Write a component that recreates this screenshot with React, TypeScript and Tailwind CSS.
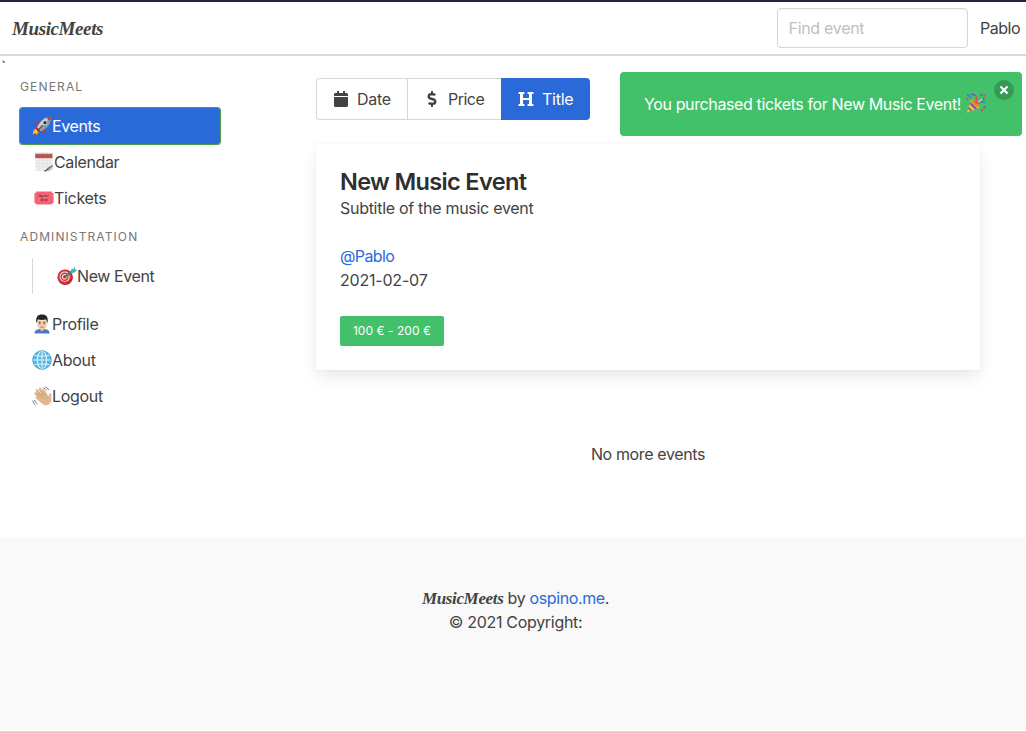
import React from "react";
import { FaCalendar, FaDollarSign, FaHeading } from "react-icons/fa";

type GlyphProps = { className?: string };

function Rocket({ className = "" }: GlyphProps) {
  return (
    <svg viewBox="0 0 20 20" className={className}>
      <path d="M10 5.5 6 5.8 2.6 9.3 6.5 9.6z" fill="#d7301f" />
      <path d="M14.4 10 14 14.2 10.6 17.2 10.4 13.2z" fill="#d7301f" />
      <path d="M5.4 12.2 1.6 13.5.6 18.4 3.6 17.3 4.4 19.2 7.8 14.8z" fill="#f2a51e" />
      <path d="M5.2 13.2 3 15.2 2 17.6 5.2 15.8z" fill="#ffe45e" />
      <path d="M5 11.2 8.9 15.2 7.4 16.6 3.6 12.6z" fill="#c6281c" />
      <path d="M18.9.7C13.4.8 8.1 4.6 5 11.2l3.9 4C15.3 12.2 19.2 6.6 18.9.7z" fill="#b5d2e1" />
      <path d="M18.9.7 7 13.2 8.9 15.2C15.3 12.2 19.2 6.6 18.9.7z" fill="#7d9fb3" />
      <path d="M18.9.7C17.3.7 15.7 1.1 14.3 1.7L17.9 5.1C18.6 3.7 18.9 2.2 18.9.7z" fill="#c83a2c" />
      <circle cx="13" cy="6.7" r="2.3" fill="#e3edf2" />
      <circle cx="13" cy="6.7" r="1.6" fill="#36201f" />
      <path d="M10.6 9.2 5.2 15.2" stroke="#b32a20" strokeWidth="1.2" />
    </svg>
  );
}

function Notepad({ className = "" }: GlyphProps) {
  return (
    <svg viewBox="0 0 20 20" className={className}>
      <path d="M1.2 2h17.3v12.5l-4.8 4.7H1.2z" fill="#efeff0" />
      <path d="M1.2 8.5h17.3M1.2 11.5h17.3M1.2 14.5h14M5 6v13M9 6v13M13 6v11" stroke="#dcdddf" strokeWidth=".6" />
      <path d="M1.2 2h17.3v4.2H1.2z" fill="#b9544f" />
      <path d="M1.2 1.5h17.3" stroke="#a8a3a0" strokeWidth="1.5" strokeDasharray="1 .7" />
      <path d="M10.2 19.2c3.5-.7 3.6-3.3 8.5-5.4l-.3 3-2.8 2.5z" fill="#c5c7ca" />
      <path d="M10.5 19c3.3-.9 3.5-3.4 8.2-5.5" stroke="#53565b" strokeWidth="1.3" fill="none" />
    </svg>
  );
}

function Ticket({ className = "" }: GlyphProps) {
  return (
    <svg viewBox="0 0 20 14" className={className}>
      <path d="M2.2.4h15.6c0 1 .7 1.6 1.8 1.6v10c-1.1 0-1.8.6-1.8 1.6H2.2C2.2 12.6 1.5 12 .4 12V2C1.5 2 2.2 1.4 2.2.4z" fill="#f7687a" />
      <rect x="3.2" y="2.2" width="13.6" height="9.6" rx=".8" fill="none" stroke="#ee566b" strokeWidth=".8" />
      <path d="M5 6V4h1.5v2M7.5 4v2H9V4.5M10.5 6V4l1 1 1-1v2M14 4v2M7 8v2h1.7V8zM10 10V8l1.5 2V8M13.8 8h-1v2h1" fill="none" stroke="#8b3a48" strokeWidth=".8" />
    </svg>
  );
}

function Target({ className = "" }: GlyphProps) {
  return (
    <svg viewBox="0 0 20 20" className={className}>
      <circle cx="8.2" cy="11.2" r="7.7" fill="#b51f2a" />
      <circle cx="7.8" cy="10.8" r="7" fill="#db3340" />
      <circle cx="7.7" cy="10.7" r="5.1" fill="#f5e9e7" />
      <circle cx="7.7" cy="10.7" r="4.2" fill="#d42f3c" />
      <circle cx="7.7" cy="10.7" r="2.8" fill="#f5e9e7" />
      <circle cx="7.7" cy="10.7" r="1.7" fill="#cf2434" />
      <path d="M8.5 12.5 13 9.5" stroke="#c59346" strokeWidth="2" />
      <path d="M8 10.6 16.5 4" stroke="#197e8b" strokeWidth="1.5" />
      <path d="M13.2 6.2 14.8 2.4 16.3 3.6 17.7.6 18.1 3.2 20 4.6 17.6 6.2 14.6 7.6z" fill="#35b6bd" />
    </svg>
  );
}

function Person({ className = "" }: GlyphProps) {
  return (
    <svg viewBox="0 0 20 20" className={className}>
      <path d="M2.5 19.5c0-3 2-4 5-4.4h5c3 .4 5 1.4 5 4.4z" fill="#4a78c6" />
      <path d="M7.6 12.5h4.8v3L10 17.6l-2.4-2.1z" fill="#e2b08c" />
      <path d="M5 6.5h10v3c0 3.5-2.4 6-5 6s-5-2.5-5-6z" fill="#f3caa8" />
      <path d="M4.6 9C3.2 3 5.8.5 10 .5S16.8 3 15.4 9l-1.2-3.5c-2.8.6-5.6.6-8.4 0z" fill="#2b2426" />
      <path d="M6.7 8h2M11.3 8h2" stroke="#4c3730" strokeWidth=".7" />
      <circle cx="7.8" cy="9.3" r=".7" fill="#402c27" />
      <circle cx="12.2" cy="9.3" r=".7" fill="#402c27" />
      <path d="M8.2 12.9q1.8 1 3.6 0" stroke="#bb5c50" strokeWidth=".8" fill="none" />
    </svg>
  );
}

function Globe({ className = "" }: GlyphProps) {
  return (
    <svg viewBox="0 0 20 20" className={className}>
      <circle cx="10" cy="10" r="9.3" fill="#5ab6e2" />
      <g fill="none" stroke="#e0f5fc" strokeWidth="1.1">
        <ellipse cx="10" cy="10" rx="4.6" ry="9" />
        <path d="M10 .7v18.6M.7 10h18.6M2.5 5.2q7.5 2.2 15 0M2.5 14.8q7.5-2.2 15 0" />
      </g>
      <circle cx="10" cy="10" r="9.3" fill="none" stroke="#359ccd" strokeWidth=".8" />
    </svg>
  );
}

function Wave({ className = "" }: GlyphProps) {
  return (
    <svg viewBox="0 0 20 20" className={className}>
      <g fill="none" stroke="#dfb48d" strokeLinecap="round" strokeWidth="2.7">
        <path d="M10 13 3.8 7.5M11 12 5 4.5M13 11 8.2 3.2M15 11 11.7 4.8" />
      </g>
      <path d="M5.5 10.5 14.5 8.5 16.3 10.7 17.2 7.7C18 6.7 19.3 7 19.2 8.2L19.4 14C18.9 18.2 14.5 20.8 11 18.5L4 12.5C2.8 11.2 4 9.8 5.5 10.5z" fill="#e2b78f" />
      <path d="M5 8.5 9.5 12.3M6.5 6.5 11 11M9.8 5.5 13 10M12.5 13.5q2-2.5 4-2.5" fill="none" stroke="#b98b66" strokeWidth=".6" />
      <path d="M11 1.8q2.5.2 3.6 2.7M13.3.7q2.6.9 3.5 3.4M2.6 14q.4 2.8 2.9 4M.8 14.5q.3 3 2.7 4.8" fill="none" stroke="#626568" strokeWidth=".8" />
    </svg>
  );
}

function Party({ className = "" }: GlyphProps) {
  return (
    <svg viewBox="0 0 20 20" className={className}>
      <path d="M5.4 6 14.2 14.4.8 19.8z" fill="#f3c32e" />
      <path d="m4.7 9 6.7 6.5-2.2.9-5.4-5.200zM2.8 13.900l3.500 3.700-1.600.6L2 15.800z" fill="#8656a8" />
      <ellipse cx="9.800" cy="10.200" rx="5.900" ry="2" transform="rotate(43 9.800 10.200)" fill="#d98a25" />
      <path d="M9.500 10q1.500-3 .8-6.500M11 10.500q2.500-1.500 3-5" fill="none" stroke="#e23f61" strokeWidth="1.400" />
      <path d="M12 10.500q2.500-2.500 7.500-1.500M1 1.500l2.700 1.700 1.300 2.300" fill="none" stroke="#347ee0" strokeWidth="1.500" />
      <path d="M12.500 9.200 16 5.700" stroke="#f2d54c" strokeWidth="1.600" />
      <path d="m8 .5 2.100 1.300-1 1.700L7 2.400zM14.700.7l2 .6-.7 2.200-2-.8zM17.800 13l1.900.6-.5 2-1.900-.7z" fill="#7c5abb" />
      <path d="m.6 4.800 2 .5-.5 2-2-.6zM17.800 1.200l1.900.5-.5 2-1.900-.6zM15.300 16l1.900.6-.5 2-1.900-.7z" fill="#d94a5a" />
      <path d="m17.200 5 1.600.6-.6 1.500-1.600-.6zM5.500.3l1.700.7-.7 1.500-1.600-.7z" fill="#2c6fae" />
    </svg>
  );
}

type ItemProps = { icon: React.ReactNode; label: string; active?: boolean; labelClass: string };

function MenuItem({ icon, label, active, labelClass }: ItemProps) {
  return (
    <a
      className={
        active
          ? "flex h-9 items-center rounded-[2px] bg-[#2a69d8] pl-3 text-white outline outline-1 outline-[#4fa04a]"
          : "flex h-9 items-center pl-3"
      }
    >
      {icon}
      <span className={labelClass}>{label}</span>
    </a>
  );
}

export default function App() {
  return (
    <div className="flex h-[731px] w-[1026px] flex-col overflow-hidden bg-white font-['Inter',sans-serif] text-base leading-6 text-[#434343]">
      <header className="flex h-14 shrink-0 items-center justify-between border-t-2 border-b-2 border-t-[#26263a] border-b-[#dadada] pl-3 pr-[5px]">
        <span className="pt-0.5 font-['Liberation_Serif',serif] text-[19px] font-bold italic tracking-[-0.4px]">MusicMeets</span>
        <div className="flex items-center gap-3">
          <input
            placeholder="Find event"
            className="h-10 w-[191px] rounded border border-[#d6d6d6] pl-[10.5px] tracking-[-0.3px] shadow-[inset_0_1px_2px_rgba(10,10,10,0.05)] placeholder:text-[#c0c0c0]"
          />
          <span className="w-[41px] whitespace-nowrap tracking-[-0.5px]">Pablo</span>
        </div>
      </header>

      <main className="flex h-[482px] shrink-0">
        <span className="w-5 shrink-0 pl-px pt-px text-[16px] leading-5">`</span>
        <aside className="w-[200px] shrink-0 pt-[22px]">
          <p className="mb-3 text-[12px] leading-[18px] tracking-[1.15px] text-[#777]">GENERAL</p>
          <MenuItem active icon={<Rocket className="size-5" />} label="Events" labelClass="tracking-[-0.4px]" />
          <MenuItem icon={<Notepad className="ml-0.5 size-5" />} label="Calendar" labelClass="tracking-[-0.37px]" />
          <MenuItem icon={<Ticket className="ml-0.5 h-[14px] w-5" />} label="Tickets" labelClass="tracking-[-0.3px]" />
          <p className="my-3 text-[12px] leading-[18px] tracking-[1.1px] text-[#777]">ADMINISTRATION</p>
          <div className="mb-3 ml-3 border-l border-[#d6d6d6] pl-3">
            <MenuItem icon={<Target className="size-5" />} label="New Event" labelClass="tracking-[-0.4px]" />
          </div>
          <MenuItem icon={<Person className="size-5" />} label="Profile" labelClass="tracking-[-0.3px]" />
          <MenuItem icon={<Globe className="size-5" />} label="About" labelClass="tracking-[-0.3px]" />
          <MenuItem icon={<Wave className="size-5" />} label="Logout" labelClass="tracking-[-0.3px]" />
        </aside>

        <section className="ml-24 w-[664px] shrink-0 pt-[22px]">
          <div className="flex h-[42px] w-[274px]">
            <button className="flex w-[91px] items-center rounded-l border border-r-0 border-[#d6d6d6] pl-4">
              <FaCalendar className="mr-2 size-4" />
              <span className="tracking-[-0.3px]">Date</span>
            </button>
            <button className="flex w-[94px] items-center border border-r-0 border-[#d6d6d6] pl-4">
              <FaDollarSign className="mr-2 size-4" />
              <span className="tracking-[-0.5px]">Price</span>
            </button>
            <button className="flex w-[89px] items-center rounded-r bg-[#2a69d8] pl-[17px] text-white">
              <FaHeading className="mr-2 size-4" />
              <span className="tracking-[-0.25px]">Title</span>
            </button>
          </div>

          <article className="mt-6 h-[226px] bg-white p-6 shadow-[0_8px_16px_-2px_rgba(10,10,10,0.1),0_0_0_1px_rgba(10,10,10,0.02)]">
            <h2 className="h-7 text-[23.5px] font-semibold leading-[27px] tracking-[-0.64px] text-[#2f2f2f]">New Music Event</h2>
            <p className="tracking-[-0.29px]">Subtitle of the music event</p>
            <p className="mt-6 tracking-[-0.6px] text-[#2a69d8]">@Pablo</p>
            <p className="tracking-[-0.2px]">2021-02-07</p>
            <button className="mt-6 h-[30px] w-[104px] rounded-[2px] bg-[#42c16a] text-[12px] tracking-[0.05px] text-white">100 € - 200 €</button>
          </article>

          <p className="mt-[72px] text-center tracking-[-0.37px]">No more events</p>
        </section>
      </main>

      <footer className="h-48 shrink-0 bg-[#f9f9f9] pt-12 pl-[5px] text-center">
        <p className="tracking-[-0.37px]">
          <span className="font-['Liberation_Serif',serif] text-[17px] font-bold italic leading-none tracking-[-0.35px]">MusicMeets</span>{" "}
          by <a className="text-[#2a69d8]">ospino.me</a>.
        </p>
        <p className="tracking-[-0.3px]">© 2021 Copyright:</p>
      </footer>

      <div className="absolute left-[620px] top-[72px] flex h-16 w-[402px] items-center rounded bg-[#42c16a] pl-6 text-white">
        <span className="whitespace-nowrap tracking-[-0.38px]">You purchased tickets for New Music Event!</span>
        <Party className="absolute left-[346px] top-[21px] size-5" />
        <button aria-label="Close" className="absolute right-2 top-2 flex size-5 items-center justify-center rounded-full bg-[#369a55]">
          <svg viewBox="0 0 10 10" className="size-[10px]">
            <path d="m1.5 1.5 7 7m0-7-7 7" stroke="#fff" strokeWidth="2" />
          </svg>
        </button>
      </div>
    </div>
  );
}
